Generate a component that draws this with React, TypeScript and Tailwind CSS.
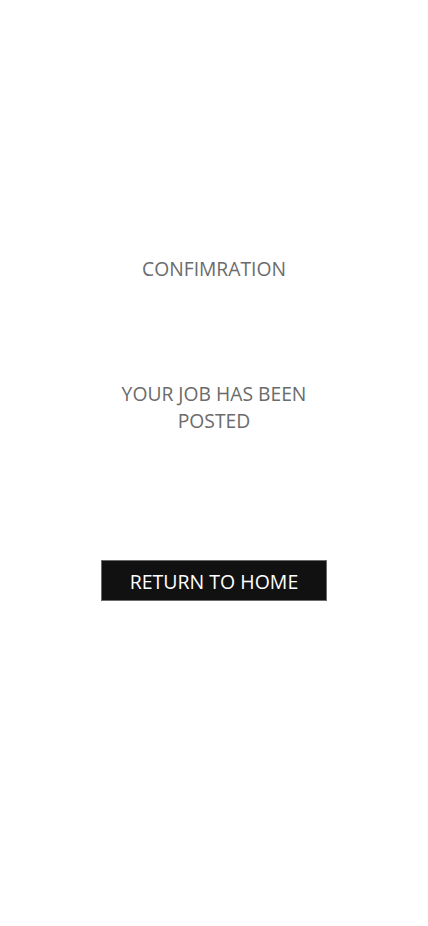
export default function App() {
  return (
    <div
      className="min-h-[926px] w-full bg-white flex flex-col items-center pt-[255px]"
      style={{ fontFamily: '"Open Sans", "Noto Sans", sans-serif' }}
    >
      <h1 className="text-[19.3px] leading-[27px] text-[#6b6b6b] font-normal">CONFIMRATION</h1>
      <p className="mt-[98px] w-[200px] text-center text-[19.3px] leading-[27px] text-[#6b6b6b]">
        YOUR JOB HAS BEEN POSTED
      </p>
      <button className="mt-[126px] w-[226px] h-[41px] pt-[2px] bg-[#111111] border border-[#6a6a6a] text-white text-[19.5px] leading-none">
        RETURN TO HOME
      </button>
    </div>
  )
}
